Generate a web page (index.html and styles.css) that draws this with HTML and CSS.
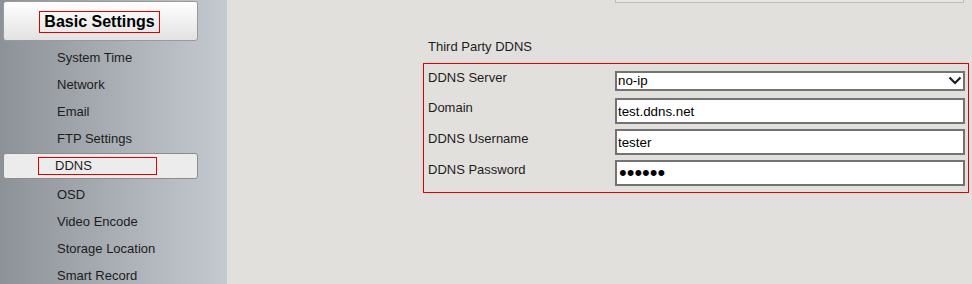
FILE: index.html
```html
<!DOCTYPE html>
<html lang="en">
<head>
    <meta charset="UTF-8">
    <meta name="viewport" content="width=device-width, initial-scale=1.0">
    <title>DDNS Settings</title>
    <link rel="stylesheet" href="styles.css">
</head>
<body>
    <div class="sidebar">
        <div class="group-button"><span class="mark-box">Basic Settings</span></div>
        <div class="menu-item">System Time</div>
        <div class="menu-item">Network</div>
        <div class="menu-item">Email</div>
        <div class="menu-item">FTP Settings</div>
        <div class="menu-item active"><span class="mark-box small">DDNS</span></div>
        <div class="menu-item">OSD</div>
        <div class="menu-item">Video Encode</div>
        <div class="menu-item">Storage Location</div>
        <div class="menu-item">Smart Record</div>
    </div>

    <div class="main">
        <div class="top-box"></div>
        <div class="section-title">Third Party DDNS</div>
        <div class="ddns-form">
            <div class="form-row first">
                <label class="form-label">DDNS Server</label>
                <div class="select-wrap">
                    <select class="form-select">
                        <option>no-ip</option>
                        <option>dyndns</option>
                    </select>
                    <svg class="select-arrow" width="14" height="9" viewBox="0 0 14 9">
                        <path d="M1.5 1.5 L7 7 L12.5 1.5" fill="none" stroke="#1a1a2a" stroke-width="2.2"/>
                    </svg>
                </div>
            </div>
            <div class="form-row">
                <label class="form-label">Domain</label>
                <input class="form-input" type="text" value="test.ddns.net">
            </div>
            <div class="form-row">
                <label class="form-label">DDNS Username</label>
                <input class="form-input" type="text" value="tester">
            </div>
            <div class="form-row">
                <label class="form-label">DDNS Password</label>
                <input class="form-input password" type="password" value="secret">
            </div>
        </div>
    </div>
</body>
</html>
```

FILE: styles.css
```css
* {
    margin: 0;
    padding: 0;
    box-sizing: border-box;
}

body {
    background-color: #e1e0dc;
    color: #1c1c1c;
    font-family: "Liberation Sans", Arial, sans-serif;
    font-size: 13px;
    height: 100vh;
    display: flex;
    overflow: hidden;
}

/* left menu */
.sidebar {
    width: 227px;
    flex-shrink: 0;
    padding: 1px 29px 0 3px;
    background: linear-gradient(to right, #8d9298, #c5c9d0);
}

.group-button {
    height: 40px;
    padding-top: 2px;
    display: flex;
    justify-content: center;
    align-items: center;
    border: 1px solid #9a9a9a;
    border-radius: 3px;
    background: linear-gradient(to bottom, #ffffff, #e2e2e2);
    margin-bottom: 3px;
}

.mark-box {
    border: 1px solid #e00000;
    padding: 1px 4px;
    line-height: 18px;
    font-size: 16px;
    font-weight: bold;
    color: #000;
    margin-right: 2px;
}

.menu-item {
    height: 27px;
    line-height: 27px;
    padding-left: 54px;
}

.menu-item.active {
    height: 26px;
    margin: 1px 0 2px;
    padding-left: 34px;
    display: flex;
    align-items: center;
    background-color: #ececec;
    border: 1px solid #8c8c8c;
    border-radius: 3px;
}

.mark-box.small {
    width: 119px;
    height: 18px;
    line-height: 16px;
    padding: 0 0 0 16px;
    font-size: 13px;
    font-weight: normal;
    color: #1c1c1c;
}

/* content */
.main {
    flex: 1;
    padding-left: 196px;
}

.top-box {
    width: 349px;
    height: 3px;
    margin-left: 192px;
    border: 1px solid #bdbdbd;
    border-top: none;
    background-color: #e6e6e4;
}

.section-title {
    margin-top: 36px;
    padding-left: 5px;
    line-height: 16px;
}

.ddns-form {
    width: 546px;
    margin-top: 8px;
    border: 1px solid #e00000;
    padding: 6px 2px 6px 4px;
    display: flex;
    flex-direction: column;
    gap: 5px;
}

.form-row {
    display: flex;
    align-items: center;
}

.form-row.first {
    margin-bottom: 2px;
}

.form-label {
    width: 187px;
    padding-bottom: 8px;
    line-height: 15px;
}

.form-row.first .form-label {
    padding-bottom: 6px;
}

.select-wrap {
    position: relative;
    width: 350px;
    height: 20px;
}

.select-arrow {
    position: absolute;
    top: 5px;
    right: 3px;
    pointer-events: none;
}

.form-select,
.form-input {
    width: 350px;
    font-family: "Liberation Sans", Arial, sans-serif;
    font-size: 13.33px;
    color: #000;
    background-color: #fff;
    border: 2px solid #737373;
}

.form-select {
    height: 20px;
    padding-left: 1px;
    outline: none;
    appearance: none;
    -webkit-appearance: none;
    border-radius: 0;
}

.form-input {
    height: 26px;
    padding: 1px 1px;
}

.form-input.password {
    font-size: 22px;
    padding-left: 2px;
}
```
